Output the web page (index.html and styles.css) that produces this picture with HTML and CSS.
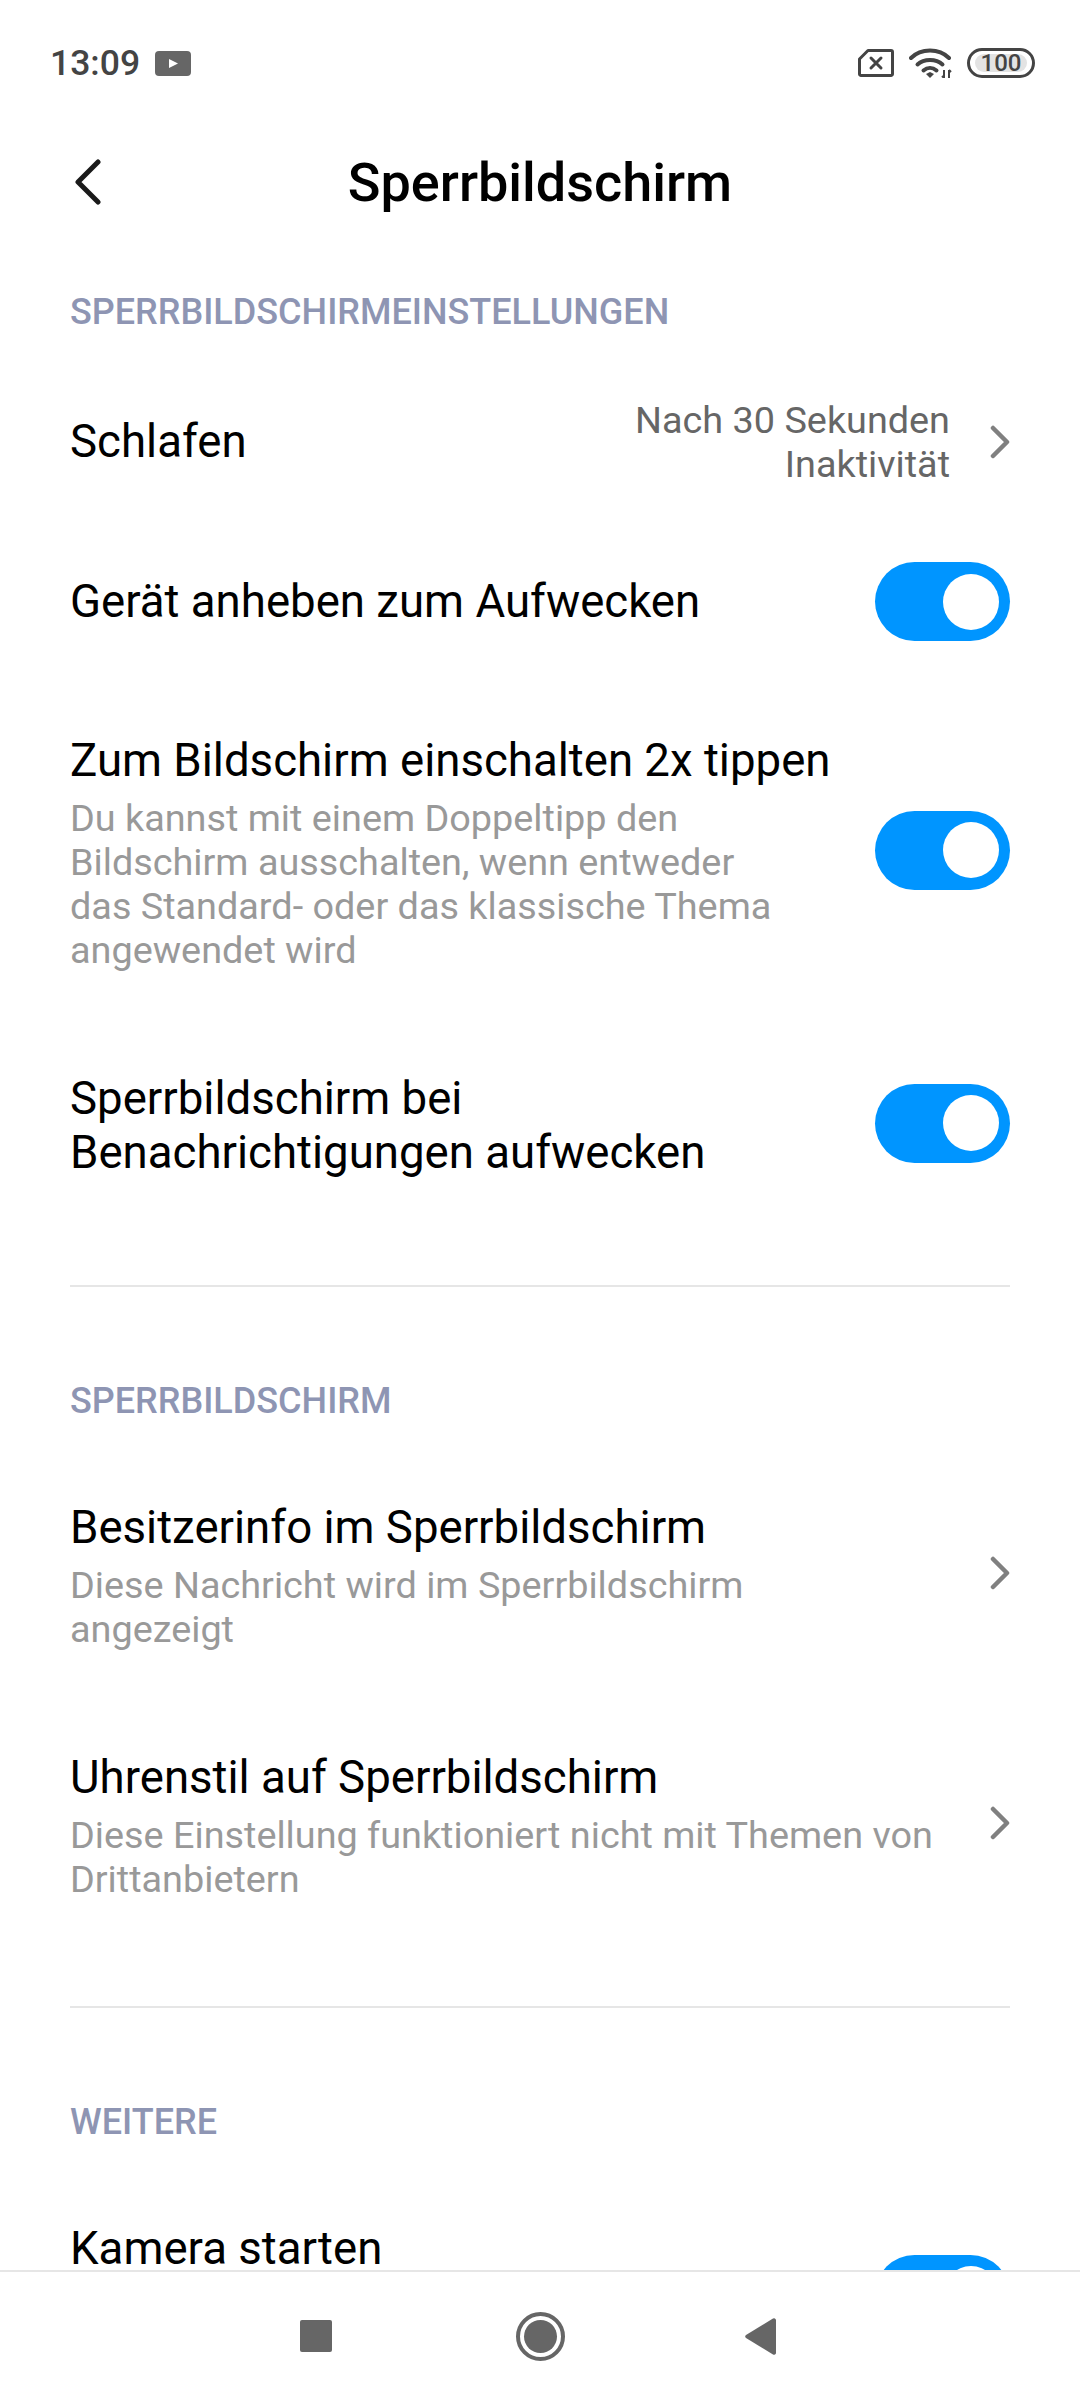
FILE: index.html
```html
<!DOCTYPE html>
<html lang="de">
<head>
<meta charset="utf-8">
<title>Sperrbildschirm</title>
<link rel="stylesheet" href="styles.css">
</head>
<body>
<div class="status">
  <div class="status-left">
    <span class="time">13:09</span>
    <svg class="yt" width="36" height="25" viewBox="0 0 36 25"><rect width="36" height="25" rx="4" fill="#666"/><path d="M14 8l9 4.500-9 4.500z" fill="#fff"/></svg>
  </div>
  <div class="status-right">
    <svg width="36" height="28" viewBox="0 0 36 28"><path d="M10 1.500H33a1.500 1.500 0 0 1 1.500 1.500V25a1.500 1.500 0 0 1-1.500 1.500H3A1.500 1.500 0 0 1 1.500 25V10z" fill="none" stroke="#444" stroke-width="3" stroke-linejoin="round"/><path d="M13 9l10 10M23 9L13 19" stroke="#444" stroke-width="3" stroke-linecap="round"/></svg>
    <svg width="43" height="30" viewBox="0 0 43 30"><g fill="none" stroke="#444" stroke-width="4" stroke-linecap="round"><path d="M2 10C12 0 30 0 40 10"/><path d="M8.500 16.500C15 10.500 27 10.500 33.500 16.500"/><path d="M14.500 22.500c4-3.500 9-3.500 13 0"/></g><path d="M17 26l4-2 4 2-4 4z" fill="#444"/><path d="M35 22v8M33 28l2 2M40 30v-8M40 22l2 2" fill="none" stroke="#444" stroke-width="2"/></svg>
    <div class="battery"><span class="battery-level">100</span></div>
  </div>
</div>

<div class="header">
  <svg class="back" width="26" height="46" viewBox="0 0 26 46"><path d="M23 3L3 23l20 20" fill="none" stroke="#1a1a1a" stroke-width="5" stroke-linecap="round" stroke-linejoin="round"/></svg>
  <h1 class="title">Sperrbildschirm</h1>
</div>

<div class="content">
  <div class="section">
    <div class="label">SPERRBILDSCHIRMEINSTELLUNGEN</div>
    <div class="row row-value">
      <div class="row-text"><div class="row-title">Schlafen</div></div>
      <div class="value">Nach 30 Sekunden<br>Inaktivität</div>
      <svg class="chevron" width="20" height="34" viewBox="0 0 20 34"><path d="M3 3l14 14L3 31" fill="none" stroke="#808080" stroke-width="4.500" stroke-linecap="round" stroke-linejoin="round"/></svg>
    </div>
    <div class="row row-single">
      <div class="row-text"><div class="row-title">Gerät anheben zum Aufwecken</div></div>
      <div class="toggle"><div class="knob"></div></div>
    </div>
    <div class="row">
      <div class="row-text">
        <div class="row-title">Zum Bildschirm einschalten 2x tippen</div>
        <div class="row-sub">Du kannst mit einem Doppeltipp den<br>Bildschirm ausschalten, wenn entweder<br>das Standard- oder das klassische Thema<br>angewendet wird</div>
      </div>
      <div class="toggle"><div class="knob"></div></div>
    </div>
    <div class="row">
      <div class="row-text"><div class="row-title">Sperrbildschirm bei<br>Benachrichtigungen aufwecken</div></div>
      <div class="toggle"><div class="knob"></div></div>
    </div>
  </div>

  <div class="section">
    <div class="label">SPERRBILDSCHIRM</div>
    <div class="row">
      <div class="row-text">
        <div class="row-title">Besitzerinfo im Sperrbildschirm</div>
        <div class="row-sub">Diese Nachricht wird im Sperrbildschirm<br>angezeigt</div>
      </div>
      <svg class="chevron" width="20" height="34" viewBox="0 0 20 34"><path d="M3 3l14 14L3 31" fill="none" stroke="#808080" stroke-width="4.500" stroke-linecap="round" stroke-linejoin="round"/></svg>
    </div>
    <div class="row">
      <div class="row-text">
        <div class="row-title">Uhrenstil auf Sperrbildschirm</div>
        <div class="row-sub">Diese Einstellung funktioniert nicht mit Themen von<br>Drittanbietern</div>
      </div>
      <svg class="chevron" width="20" height="34" viewBox="0 0 20 34"><path d="M3 3l14 14L3 31" fill="none" stroke="#808080" stroke-width="4.500" stroke-linecap="round" stroke-linejoin="round"/></svg>
    </div>
  </div>

  <div class="section">
    <div class="label">WEITERE</div>
    <div class="row">
      <div class="row-text">
        <div class="row-title">Kamera starten</div>
        <div class="row-sub-blank"></div>
      </div>
      <div class="toggle"><div class="knob"></div></div>
    </div>
  </div>
</div>

<div class="navbar">
  <div class="nav-square"></div>
  <div class="nav-home"><div class="nav-home-dot"></div></div>
  <svg width="31" height="37" viewBox="0 0 31 37"><path d="M28 .500a2 2 0 0 1 3 1.500v33a2 2 0 0 1-3 1.500L1 20a2 2 0 0 1 0-3z" fill="#666"/></svg>
</div>
</body>
</html>
```

FILE: styles.css
```css
* {
  box-sizing: border-box;
}

html, body {
  margin: 0;
  padding: 0;
}

body {
  width: 1080px;
  height: 2400px;
  display: flex;
  flex-direction: column;
  overflow: hidden;
  background-color: #ffffff;
  font-family: Roboto, "Noto Sans", sans-serif;
  color: #000000;
}

.status {
  height: 126px;
  flex: none;
  display: flex;
  justify-content: space-between;
  align-items: center;
  padding: 0 45px 0 50px;
}

.status-left, .status-right {
  display: flex;
  align-items: center;
}

.time {
  font-size: 35.5px;
  font-weight: 500;
  color: #444444;
}

.yt {
  margin-left: 15px;
}

.status-right svg {
  margin-right: 15px;
}

.battery {
  width: 68px;
  height: 30px;
  border: 3px solid #444444;
  border-radius: 15px;
  padding: 3px 5px;
}

.battery-level {
  display: block;
  height: 18px;
  border-radius: 9px;
  background-color: #e3e3e3;
  color: #444444;
  font-size: 24px;
  font-weight: 500;
  line-height: 18px;
  text-align: center;
}

.header {
  height: 112px;
  flex: none;
  display: flex;
  align-items: center;
  padding-left: 75px;
}

.title {
  flex: 1;
  margin: 0 0 0 -26px;
  padding-right: 75px;
  font-size: 54px;
  font-weight: 500;
  text-align: center;
}

/* last row runs on under the navbar */
.content {
  flex: 1;
  min-height: 0;
  padding: 0 70px;
}

.section {
  padding-top: 94px;
  padding-bottom: 55px;
  border-bottom: 2px solid #e6e6e6;
}

.section:first-child {
  padding-top: 54px;
}

.section:last-child {
  border-bottom: none;
}

.label {
  margin-bottom: 30px;
  font-size: 36px;
  font-weight: 500;
  line-height: 40px;
  color: #8e95b3;
}

.row {
  display: flex;
  align-items: center;
  padding: 44px 0 50px;
}

.row-value {
  padding: 36px 0;
}

.row-single {
  padding: 40px 0 43px;
}

.row-text {
  flex: 1;
  padding-top: 6px;
}

.row-value .row-text, .row-single .row-text {
  padding-top: 0;
}

.row-title {
  font-size: 45.6px;
  line-height: 54px;
}

.row-sub {
  margin-top: 8px;
  font-size: 37.8px;
  line-height: 44px;
  color: #999999;
}

.row-sub-blank {
  height: 96px;
}

.value {
  font-size: 37.8px;
  line-height: 44px;
  color: #666666;
  text-align: right;
  margin-right: 40px;
}

.chevron {
  flex: none;
}

.toggle {
  width: 135px;
  height: 79px;
  flex: none;
  display: flex;
  align-items: center;
  justify-content: flex-end;
  padding-right: 11px;
  border-radius: 40px;
  background-color: #0095ff;
}

.knob {
  width: 56px;
  height: 56px;
  border-radius: 50%;
  background-color: #ffffff;
}

.navbar {
  height: 130px;
  flex: none;
  display: flex;
  align-items: center;
  padding-left: 300px;
  border-top: 2px solid #e6e6e6;
  background-color: #ffffff;
  position: relative;
  z-index: 1;
}

.nav-square {
  width: 32px;
  height: 32px;
  border-radius: 2px;
  background-color: #666666;
}

.nav-home {
  width: 49px;
  height: 49px;
  margin-left: 184px;
  margin-right: 180px;
  display: flex;
  align-items: center;
  justify-content: center;
  border: 4px solid #666666;
  border-radius: 50%;
}

.nav-home-dot {
  width: 33px;
  height: 33px;
  border-radius: 50%;
  background-color: #666666;
}
```
